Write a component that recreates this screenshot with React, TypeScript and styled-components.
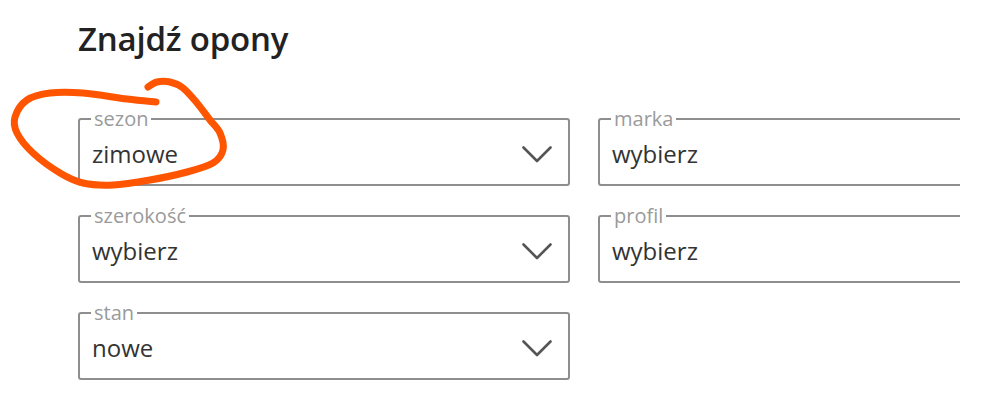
import styled, { createGlobalStyle } from "styled-components";

const GlobalStyle = createGlobalStyle`
  body {
    margin: 0;
    background: #ffffff;
    font-family: "Open Sans", "Liberation Sans", sans-serif;
  }
`;

const Page = styled.div`
  position: relative;
  width: 998px;
  height: 416px;
  padding-left: 78px;
  padding-top: 19px;
  box-sizing: border-box;
  overflow: hidden;
`;

const Title = styled.h2`
  margin: 0 0 48px 0;
  font-size: 33px;
  line-height: 40px;
  font-weight: 600;
  color: #222222;
  letter-spacing: -0.2px;
`;

const Form = styled.div`
  width: 882px;
  overflow: hidden;
  display: grid;
  grid-template-columns: 492px 492px;
  column-gap: 28px;
  row-gap: 18px;
`;

const Field = styled.fieldset`
  margin: 0;
  padding: 0 11px 7px 11px;
  border: 2px solid #8e8e8e;
  border-radius: 3px;
  min-width: 0;
`;

const Label = styled.legend`
  padding: 0 3px;
  font-size: 20px;
  line-height: 24px;
  color: #9a9a9a;
`;

const ValueRow = styled.div`
  display: flex;
  align-items: center;
  justify-content: space-between;
  height: 46px;
  padding-left: 1px;
  padding-right: 5px;
`;

const Value = styled.span`
  font-size: 24px;
  line-height: 32px;
  color: #333333;
`;

const Chevron = () => (
  <svg width="30" height="17" viewBox="0 0 30 17">
    <polyline
      points="1.5,1.5 15,15 28.5,1.5"
      fill="none"
      stroke="#555555"
      strokeWidth="2.6"
      strokeLinecap="round"
      strokeLinejoin="round"
    />
  </svg>
);

const Scribble = styled.svg`
  position: absolute;
  left: 0;
  top: 0;
  pointer-events: none;
`;

const scribblePoints: [number, number][] = [
  [156, 102], [127, 99], [83, 93], [50, 93], [27, 100], [15, 117], [17, 133],
  [33, 153], [60, 173], [83, 183], [113, 185], [150, 180], [187, 172],
  [213, 163], [223, 150], [220, 133], [210, 120], [197, 103], [183, 88],
  [170, 82], [157, 82], [148, 87],
];

// catmull-rom to bezier so the loop stays smooth
const smoothPath = (pts: [number, number][]) => {
  let d = `M${pts[0][0]},${pts[0][1]}`;
  for (let i = 0; i < pts.length - 1; i++) {
    const p0 = pts[i - 1] || pts[i];
    const p1 = pts[i];
    const p2 = pts[i + 1];
    const p3 = pts[i + 2] || p2;
    const c1x = p1[0] + (p2[0] - p0[0]) / 6;
    const c1y = p1[1] + (p2[1] - p0[1]) / 6;
    const c2x = p2[0] - (p3[0] - p1[0]) / 6;
    const c2y = p2[1] - (p3[1] - p1[1]) / 6;
    d += ` C${c1x},${c1y} ${c2x},${c2y} ${p2[0]},${p2[1]}`;
  }
  return d;
};

const fields = [
  { label: "sezon", value: "zimowe", arrow: true },
  { label: "marka", value: "wybierz", arrow: false },
  { label: "szerokość", value: "wybierz", arrow: true },
  { label: "profil", value: "wybierz", arrow: false },
  { label: "stan", value: "nowe", arrow: true },
];

const App = () => {
  return (
    <>
      <GlobalStyle />
      <Page>
        <Title>Znajdź opony</Title>
        <Form>
          {fields.map((f) => (
            <Field key={f.label}>
              <Label>{f.label}</Label>
              <ValueRow>
                <Value>{f.value}</Value>
                {f.arrow && <Chevron />}
              </ValueRow>
            </Field>
          ))}
        </Form>
        <Scribble width="260" height="200" viewBox="0 0 260 200">
          <path
            d={smoothPath(scribblePoints)}
            fill="none"
            stroke="#ff5500"
            strokeWidth="7"
            strokeLinecap="round"
            strokeLinejoin="round"
          />
        </Scribble>
      </Page>
    </>
  );
};

export default App;
